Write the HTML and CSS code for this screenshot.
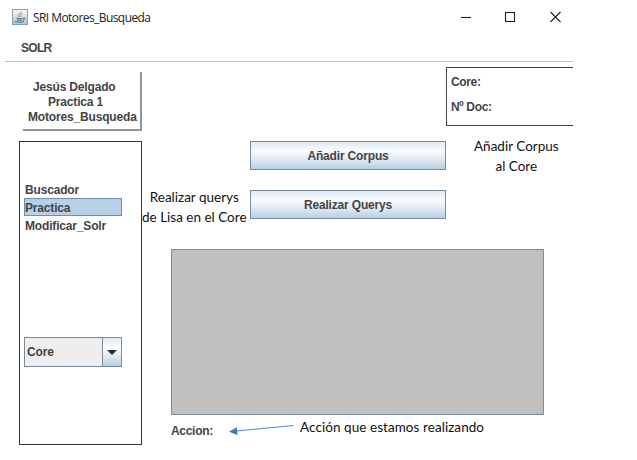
FILE: index.html
```html
<!DOCTYPE html>
<html lang="es">
<head>
<meta charset="utf-8">
<title>SRI Motores_Busqueda</title>
<link rel="stylesheet" href="styles.css">
</head>
<body>
<div class="window">
  <header class="titlebar">
    <svg class="app-icon" width="16" height="16" viewBox="0 0 16 16">
      <defs><linearGradient id="tile" x1="0" y1="0" x2="0" y2="1"><stop offset="0" stop-color="#f4f7f9"/><stop offset="1" stop-color="#abc2d4"/></linearGradient></defs>
      <rect x=".5" y=".5" width="15" height="15" fill="url(#tile)" stroke="#8d9dac"/>
      <path d="M8.600 2.500C10 4.500 4 5.500 7.200 8M10.200 4.500C7 5.500 9.700 6.300 8 8" fill="none" stroke="#d77b48" stroke-width="1"/>
      <path d="M4.500 9.200q3 1 6 0M5 10.900q3 .9 5 0M3 12.500q4.500 1.600 9 0M11 9q2.800-.3 1.200 1.500l-1.200.6" fill="none" stroke="#456b8c" stroke-width="1"/>
    </svg>
    <span class="title">SRI Motores_Busqueda</span>
    <svg class="controls" width="102" height="14" viewBox="0 0 102 14" fill="none" stroke="#222" stroke-width="1.100">
      <path d="M1 7.500h10"/>
      <rect x="45.500" y="2.500" width="9" height="9"/>
      <path d="M90.500 2l10 10M100.500 2l-10 10"/>
    </svg>
  </header>
  <nav class="menubar">SOLR</nav>
  <div class="content">
    <aside class="side">
      <div class="card"><span>Jesús Delgado</span><span class="line-two">Practica 1</span><span class="line-three">Motores_Busqueda</span></div>
      <div class="panel">
        <ul class="list">
          <li>Buscador</li>
          <li class="selected">Practica</li>
          <li>Modificar_Solr</li>
        </ul>
        <div class="combo">
          <span class="combo-value">Core</span>
          <span class="combo-button"><svg width="10" height="5" viewBox="0 0 10 5"><path d="M0 0h10L5 5z" fill="#282b30"/></svg></span>
        </div>
      </div>
    </aside>
    <main class="main">
      <div class="info"><span>Core:</span><span>Nº Doc:</span></div>
      <div class="buttons">
        <button class="btn">Añadir Corpus</button>
        <button class="btn">Realizar Querys</button>
      </div>
      <div class="output"></div>
      <div class="status">Accion:</div>
    </main>
  </div>
</div>
<p class="note note-add">Añadir Corpus<br>al Core</p>
<p class="note note-query">Realizar querys<br>de Lisa en el Core</p>
<p class="note note-action">Acción que estamos realizando</p>
<svg class="arrow" width="66" height="12" viewBox="0 0 66 12"><path d="M7 7L64.500 1.500" stroke="#5b85cf" stroke-width="1"/><path d="M0 7.700L7.800 3.200 8.600 11z" fill="#4472c4"/></svg>
</body>
</html>
```

FILE: styles.css
```css
* { box-sizing: border-box; }
body {
  margin: 0;
  width: 637px;
  height: 460px;
  position: relative;
  overflow: hidden;
  background: #fff;
  color: #444;
  font: bold 12px/15px "Liberation Sans", Arial, sans-serif;
  letter-spacing: -0.17px;
  white-space: nowrap;
}
.window { width: 568px; margin-left: 5px; }
.titlebar {
  display: flex;
  align-items: center;
  height: 34px;
  padding: 0 11px 0 7px;
}
.title {
  margin-left: 5px;
  padding-top: 1px;
  color: #222;
  font: 12px/16px "Open Sans", "Noto Sans", sans-serif;
  letter-spacing: -0.57px;
}
.controls { margin-left: auto; }
.menubar {
  height: 28px;
  padding: 7px 0 0 16px;
  border-bottom: 1px solid #c4c4c4;
  letter-spacing: -0.7px;
}
.content { display: flex; }
.side { width: 137px; padding: 10px 0 0 14px; }
.card {
  display: flex;
  flex-direction: column;
  width: 119px;
  height: 59px;
  margin-left: 4px;
  padding: 8px 0 0 5px;
  border-right: 2px solid #929292;
  border-bottom: 2px solid #929292;
}
.card span { padding-left: 5px; }
.card .line-two { padding-left: 20px; }
.card .line-three { padding-left: 0; }
.panel {
  display: flex;
  flex-direction: column;
  width: 123px;
  height: 304px;
  margin-top: 10px;
  padding: 38px 0 0 4px;
  border: 1px solid #353535;
}
.list { margin: 0; padding: 0; list-style: none; }
.list li {
  width: 98px;
  height: 18px;
  border: 1px solid transparent;
  line-height: 18px;
}
.list .selected { background: #b8cfe5; border-color: #6f8fad; }
.combo {
  display: flex;
  width: 98px;
  height: 30px;
  margin-top: 103px;
  border: 1px solid #7a8a99;
  background: #eee;
}
.combo-value { flex: 1; padding-left: 2px; line-height: 28px; }
.combo-button {
  display: flex;
  align-items: center;
  justify-content: center;
  width: 19px;
  padding-top: 1px;
  border-left: 1px solid #7a8a99;
  background: linear-gradient(#dde9f4, #fff 35%, #b8cfe5);
}
.main { flex: 1; display: flex; flex-direction: column; padding: 5px 0 0 29px; }
.info {
  display: flex;
  flex-direction: column;
  gap: 10px;
  align-self: flex-end;
  width: 127px;
  height: 59px;
  padding: 7px 0 0 4px;
  border: 1px solid #444;
  border-right: 0;
  letter-spacing: -0.35px;
}
.buttons { display: flex; flex-direction: column; gap: 20px; margin: 15px 0 0 79px; }
.btn {
  width: 196px;
  height: 29px;
  padding: 2px 0 0;
  border: 1px solid #7a8a99;
  border-radius: 0;
  background: linear-gradient(#dde9f4, #fafcfe 33%, #edf3f9 50%, #b8cfe5);
  color: #444;
  font: inherit;
  letter-spacing: inherit;
}
.output {
  width: 373px;
  height: 166px;
  margin-top: 30px;
  border: 1px solid #7f8e9b;
  background: #c0c0c0;
}
.status { margin-top: 9px; letter-spacing: -0.3px; }
.note {
  position: absolute;
  margin: 0;
  color: #111;
  text-align: center;
  font: 13.5px/20px "Lato", sans-serif;
  letter-spacing: 0;
}
.note-add { left: 474px; top: 136px; }
.note-query { left: 142px; top: 187px; }
.note-action { left: 300px; top: 417px; letter-spacing: .06px; }
.arrow { position: absolute; left: 229px; top: 424px; }
```
